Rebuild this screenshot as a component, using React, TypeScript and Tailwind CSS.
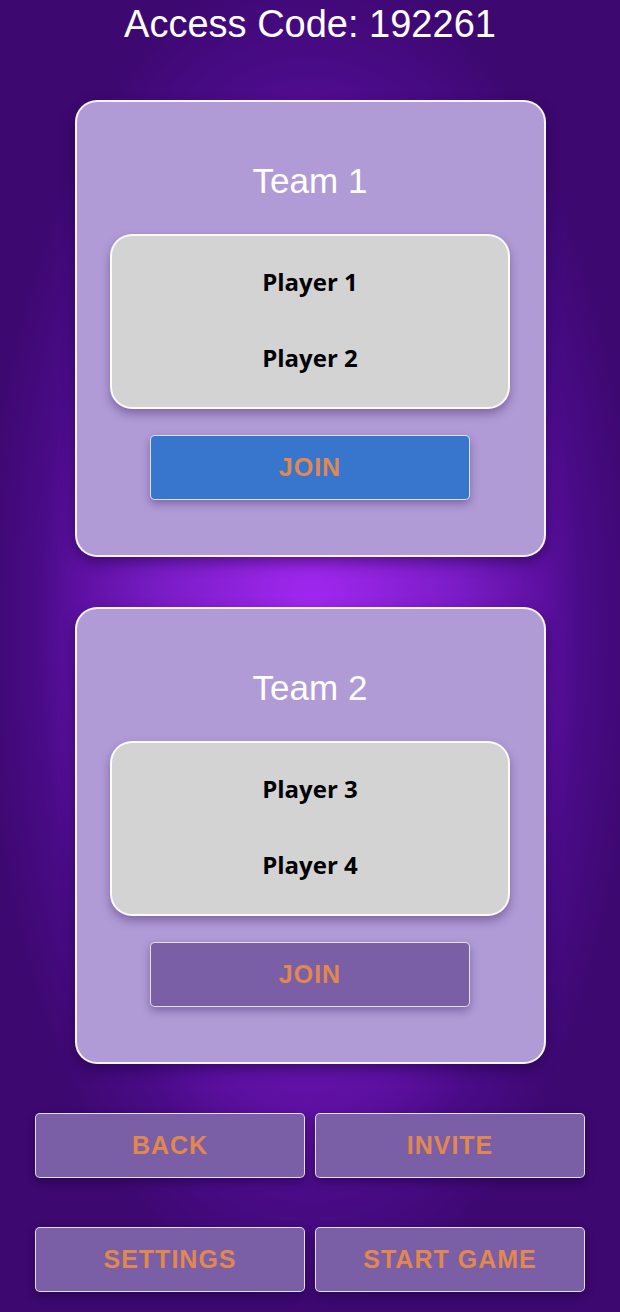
const teams = [
  { name: "Team 1", players: ["Player 1", "Player 2"], joined: true },
  { name: "Team 2", players: ["Player 3", "Player 4"], joined: false },
];

const actions = ["BACK", "INVITE", "SETTINGS", "START GAME"];

function TeamCard({ name, players, joined }: { name: string; players: string[]; joined: boolean }) {
  return (
    <div className="w-[471px] flex flex-col items-center pt-[61px] pb-[55px] rounded-[22px] border-2 border-white/90 bg-[#b09bd6] shadow-[0_6px_14px_rgba(20,0,50,0.45)]">
      <h2 className="text-[35px] leading-none text-white font-['Liberation_Sans',Arial,sans-serif]">
        {name}
      </h2>
      <div className="mt-[36px] w-[400px] h-[175px] flex flex-col items-center pt-[34px] gap-[52px] rounded-[22px] border-2 border-white/90 bg-[#d3d3d3] shadow-[0_5px_10px_rgba(40,10,80,0.35)]">
        {players.map((p) => (
          <div key={p} className="text-[24px] leading-none font-bold text-black font-['Open_Sans',sans-serif]">
            {p}
          </div>
        ))}
      </div>
      <button
        className={`mt-[26px] w-[320px] h-[65px] rounded-[5px] border border-white/80 shadow-[0_4px_8px_rgba(40,10,80,0.35)] text-[25px] font-bold tracking-[1px] text-[#e0884f] font-['Liberation_Sans',Arial,sans-serif] ${
          joined ? "bg-[#3876cd]" : "bg-[#7a5ea6]"
        }`}
      >
        JOIN
      </button>
    </div>
  );
}

export default function App() {
  return (
    <div className="w-[620px] h-[1312px] flex flex-col items-center bg-[#3d0870] bg-[radial-gradient(ellipse_330px_680px_at_50%_48%,#a328f2_0%,#7a1cc6_45%,#5e10a2_70%,#4a0b88_82%,#3d0870_100%)]">
      <h1 className="mt-[5px] text-[38px] leading-none text-white font-['Liberation_Sans',Arial,sans-serif]">
        Access Code: 192261
      </h1>
      <div className="mt-[57px] flex flex-col gap-[50px]">
        {teams.map((t) => (
          <TeamCard key={t.name} {...t} />
        ))}
      </div>
      <div className="mt-[49px] grid grid-cols-2 gap-x-[10px] gap-y-[49px]">
        {actions.map((a) => (
          <button
            key={a}
            className="w-[270px] h-[65px] rounded-[5px] border border-white/80 bg-[#7a5ea6] shadow-[0_4px_8px_rgba(20,0,50,0.45)] text-[25px] font-bold tracking-[1px] text-[#e0884f] font-['Liberation_Sans',Arial,sans-serif]"
          >
            {a}
          </button>
        ))}
      </div>
    </div>
  );
}
